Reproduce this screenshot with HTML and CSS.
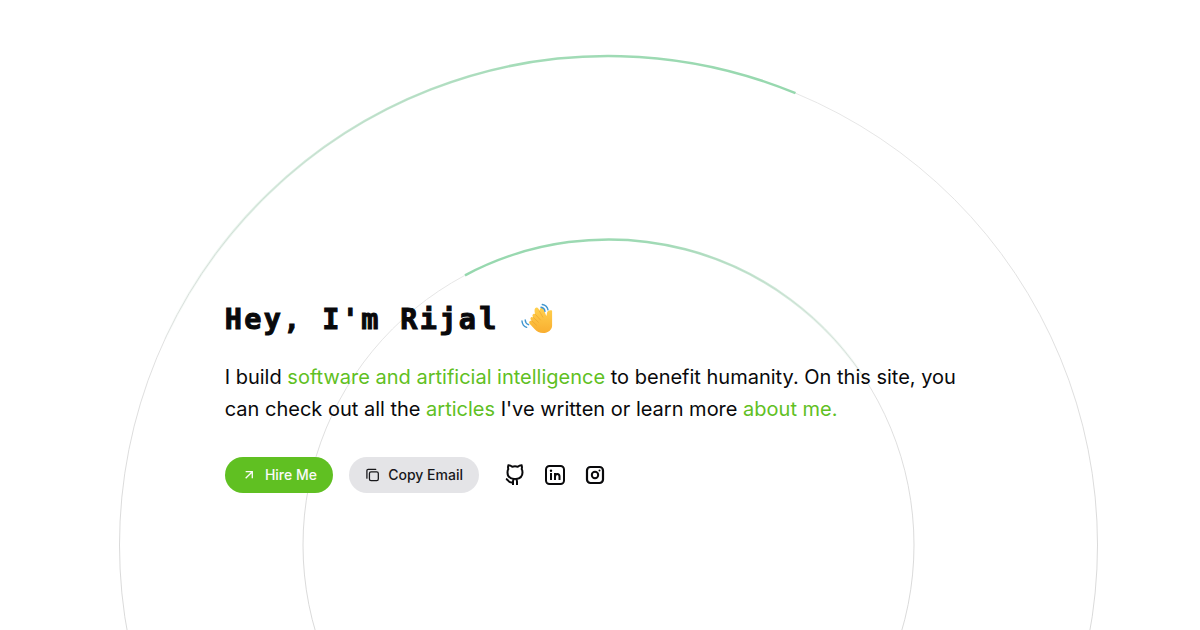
FILE: index.html
```html
<!DOCTYPE html>
<html lang="en">
<head>
<meta charset="utf-8">
<title>Rijal</title>
<link rel="stylesheet" href="styles.css">
</head>
<body>
<svg class="orbits" width="1200" height="630" viewBox="0 0 1200 630" fill="none" aria-hidden="true">
  <defs>
    <linearGradient id="outer" gradientUnits="userSpaceOnUse" x1="795" y1="93" x2="150" y2="350">
      <stop offset="0" stop-color="#96d8ae"/><stop offset=".35" stop-color="#a4dcb8"/><stop offset="1" stop-color="#a4cfb4" stop-opacity="0"/>
    </linearGradient>
    <linearGradient id="inner" gradientUnits="userSpaceOnUse" x1="465" y1="275" x2="885" y2="385">
      <stop offset="0" stop-color="#96d8ae"/><stop offset=".4" stop-color="#a0dab5"/><stop offset="1" stop-color="#a4cfb4" stop-opacity="0"/>
    </linearGradient>
    <linearGradient id="line" x1="0" y1="0" x2="0" y2="1">
      <stop offset="0" stop-color="#e8e8e8"/><stop offset=".5" stop-color="#dadada"/>
    </linearGradient>
  </defs>
  <circle cx="608.5" cy="545" r="489" stroke="url(#line)"/>
  <circle cx="608.5" cy="545" r="305.5" stroke="url(#line)"/>
  <path d="M795.5 93.2A489 489 0 0 0 165 339" stroke="url(#outer)" stroke-width="2.5"/>
  <path d="M465 275.3A305.5 305.5 0 0 1 865 379" stroke="url(#inner)" stroke-width="2.5"/>
</svg>
<main class="hero">
  <h1 class="title"><span>Hey, I'm Rija<span class="slab">l</span></span>
    <svg class="wave" width="32" height="32" viewBox="0 0 32 32" aria-label="waving hand">
      <defs><linearGradient id="skin" x1="0" y1="0" x2="0" y2="1"><stop offset="0" stop-color="#ffd04d"/><stop offset="1" stop-color="#f9ae30"/></linearGradient></defs>
      <path fill="url(#skin)" d="M14.2 5.200c1-1 2.500-.7 3.300.5l1.500 2.300c-.5-1.500-.1-2.600 1-3 1.200-.4 2.200.2 2.800 1.600l2.500 6.300c.6-1.200.5-2.400.8-3.400.5-1.600 2-2.500 3.900-2.300.6.1 1.100.4 1.100 1v14.500c0 4-4 7.300-9 7.300-3.600 0-6.200-1.600-8.600-4.100l-4.600-4.800c-.9-1-1-2.200-.2-2.900.6-.6 1.500-.6 2.200-.2-1.500-1.500-1.900-2.800-1-3.600.7-.6 1.500-.5 2.300.1-.9-1.400-1-2.500-.1-3.200.7-.6 1.500-.6 2.200-.1-.8-1.500-1-5.200-.1-6Z"/>
      <path fill="none" stroke="#eaa02c" stroke-width=".6" stroke-linecap="round" d="m11 18 4.500 4.200M12.400 14.500l5 4.800M14.500 11.500l5 5.500M18.200 7.800l3.600 6.300"/>
      <path fill="none" stroke="#3f96cf" stroke-width="1.400" stroke-linecap="round" d="M20 4.300c2.200.4 3.700 1.900 4 4M21.300 1.500c3 .5 5.200 2.600 5.700 5.400M4.200 17c.1 2.200 1.400 4 3.400 4.700M1 18c.2 3 2 5.500 4.700 6.400"/>
    </svg>
  </h1>
  <p class="intro">I build <a>software and artificial intelligence</a> to benefit humanity. On this site, you<br>can check out all the <a>articles</a> I've written or learn more <a>about me.</a></p>
  <div class="actions">
    <a class="btn btn-primary"><svg width="16" height="16" viewBox="0 0 24 24" fill="none" stroke="currentColor" stroke-width="2"><path d="M7 7h10v10M7 17 17 7"/></svg>Hire Me</a>
    <a class="btn btn-muted"><svg width="16" height="16" viewBox="0 0 24 24" fill="none" stroke="currentColor" stroke-width="2" stroke-linecap="round" stroke-linejoin="round"><rect x="7" y="7" width="14" height="14" rx="2.500"/><path d="M3 17V5a2 2 0 0 1 2-2h12"/></svg>Copy Email</a>
    <div class="social">
      <svg width="24" height="24" viewBox="0 0 24 24"><path fill="none" stroke="currentColor" stroke-width="2" d="M10 22v-3.500c0-1.300.4-1.900 1-2.500-3.500-.4-6.500-1.600-6.500-6.500 0-1.500.2-2.600.8-3.500-.4-1.200-.3-2.600.1-3.700 1.500.1 2.900.7 3.800 1.400a11 11 0 0 1 5.600 0c.9-.7 2.300-1.300 3.800-1.400.4 1.100.5 2.500.1 3.700.6.900.8 2 .8 3.500 0 4.900-3 6.100-6.500 6.500.6.600 1 1.200 1 2.500V22M10 19.300c-2 .4-3.500.1-4.500-1.300-.7-1-1.300-1.700-2.600-1.900"/></svg>
      <svg width="24" height="24" viewBox="0 0 24 24"><rect x="3" y="3" width="18" height="18" rx="3.500" fill="none" stroke="currentColor" stroke-width="2"/><path fill="none" stroke="currentColor" stroke-width="2" d="M8 10v7M12 17v-7M12 14c0-2 .8-3 2.300-3S16.500 12 16.500 13.500V17"/><circle cx="8" cy="7.700" r="1.200"/></svg>
      <svg width="24" height="24" viewBox="0 0 24 24"><rect x="4" y="4" width="16" height="16" rx="3.500" fill="none" stroke="currentColor" stroke-width="2.200"/><circle cx="12" cy="12" r="3.200" fill="none" stroke="currentColor" stroke-width="2"/><circle cx="16.500" cy="7.500" r="1"/></svg>
    </div>
  </div>
</main>
</body>
</html>
```
FILE: styles.css
```css
body { margin: 0; height: 630px; overflow: hidden; background: #fff; color: #09090b; font-family: Inter, sans-serif; }
.orbits { position: absolute; inset: 0; z-index: -1; }
.hero { padding: 300px 0 0 224.700px; width: 760px; }
.title { display: flex; align-items: center; gap: 25px; height: 40px; margin: 0 0 20.600px; font: 700 28.500px/40px "DejaVu Sans Mono", monospace; letter-spacing: 2.340px; -webkit-text-stroke: 1px #09090b; white-space: nowrap; }
.slab { margin-left: -1px; font-family: "Liberation Mono", monospace; font-size: 30.500px; letter-spacing: .9px; -webkit-text-stroke: 1.200px #09090b; }
.wave { flex: none; margin-top: -2px; }
.intro { margin: 0 0 32px; font-size: 20px; line-height: 32px; white-space: nowrap; }
.intro a { color: #5fc023; }
.actions { display: flex; align-items: center; gap: 16px; padding-left: .3px; }
.btn { display: flex; align-items: center; box-sizing: border-box; height: 36px; padding: 0 16px; gap: 8px; border-radius: 18px; font-size: 14px; font-weight: 500; white-space: nowrap; }
.btn-primary { width: 108px; background: #60c022; color: #fafafa; }
.btn-muted { width: 130px; background: #e4e4e7; color: #18181b; }
.social { display: flex; gap: 16px; padding-left: 8px; }
.social svg { display: block; }
```
